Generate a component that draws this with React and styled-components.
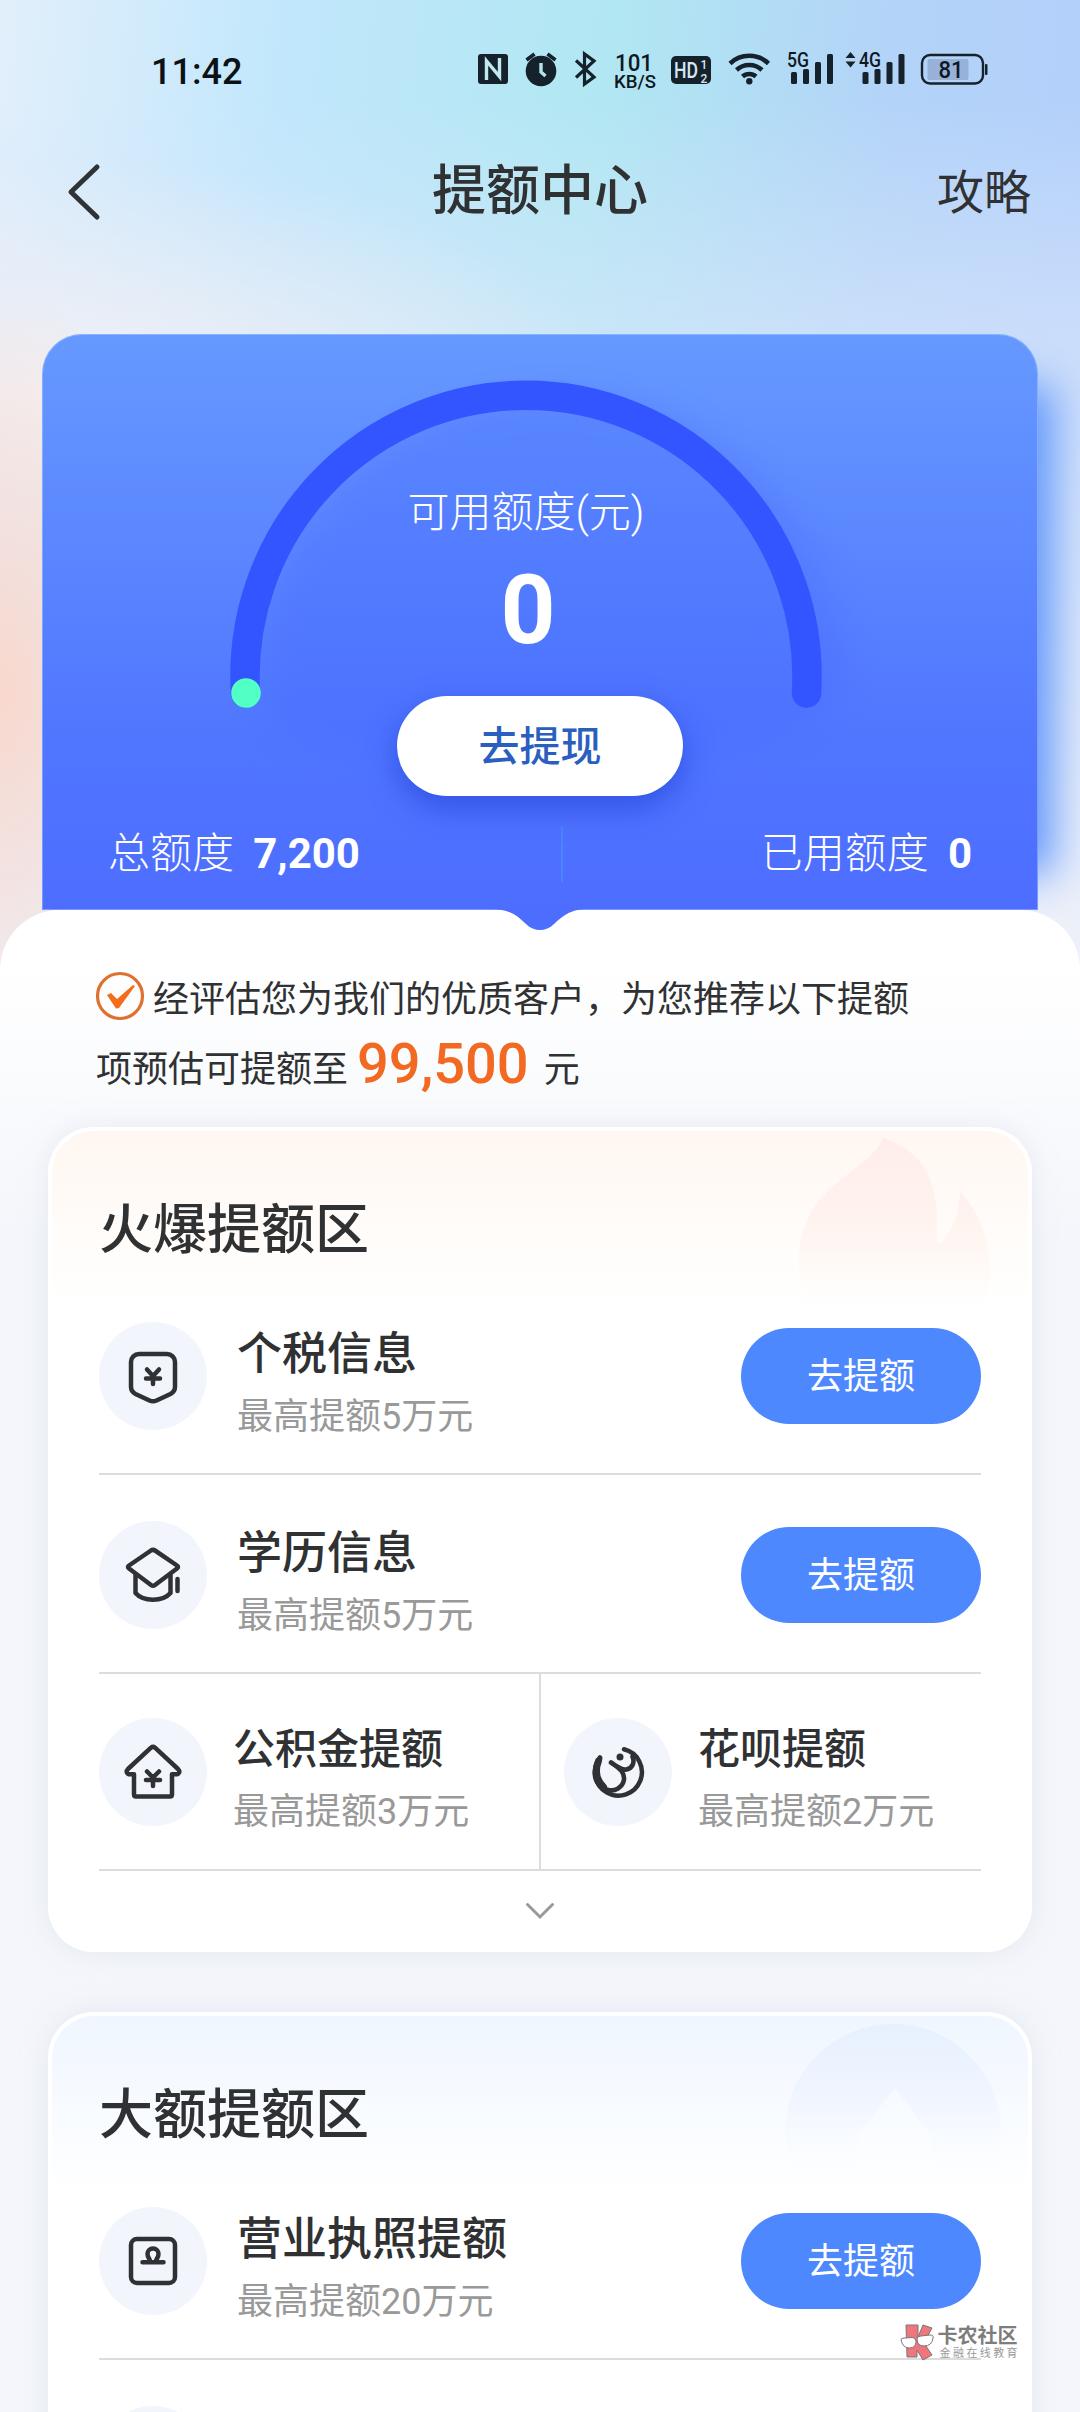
import styled, { createGlobalStyle } from 'styled-components';

const hotItems = [
  { icon: 'tax', title: '个税信息', limit: '最高提额5万元' },
  { icon: 'school', title: '学历信息', limit: '最高提额5万元' },
];

const hotHalfItems = [
  { icon: 'house', title: '公积金提额', limit: '最高提额3万元' },
  { icon: 'huabei', title: '花呗提额', limit: '最高提额2万元' },
];

const largeItems = [
  { icon: 'license', title: '营业执照提额', limit: '最高提额20万元' },
];

const icons = {
  tax: (
    <>
      <path d="M40 32h28a8 8 0 0 1 8 8v25c0 3-1.800 5.500-4.500 7l-14 6.500q-3.500 1.700-7 0l-14-6.500c-2.700-1.500-4.500-4-4.500-7V40a8 8 0 0 1 8-8z" />
      <path d="M48 47.500l6 6.500 6-6.500M47 56.500h14M54 54v8" />
    </>
  ),
  school: (
    <>
      <path d="M52 29.500q2-1.300 4 0l22 15q2 1.500 0 3L56 64q-2 1.500-4 0L30 47.500q-2-1.500 0-3z" />
      <path d="M36.500 54v18c8 9 27 9 35 0V54M78.500 58v12" />
    </>
  ),
  house: (
    <>
      <path d="M52 29.700q2-1.700 4 0l23 21.300c2.500 2.500 1 5.300-2 5.300h-4v20.200q0 2-2 2H37q-2 0-2-2V56.300h-4c-3 0-4.500-2.800-2-5.300z" />
      <path d="M48 53.500l6 6 6-6M47 62h14M54 60v8" />
    </>
  ),
  huabei: (
    <>
      <path d="M60 31.300A23.500 23.500 0 1 1 36 39.500" />
      <path
        d="M36 41C29 51 29 62 37 68c5 5 12 5.500 17 2.500 7-4.500 7.500-12 3.500-17.500-3-4-6-5.500-10.500-8.500 5 3.500 11 8 15.500 7 6-1.200 8.500-7 6-13"
        strokeWidth="4.600"
      />
      <path d="M34.500 43c-4 10-2 19 5 26" strokeWidth="7" />
      <circle cx="56" cy="39" r="3.500" fill="#2f3134" stroke="none" />
    </>
  ),
  license: (
    <>
      <rect x="32" y="32" width="44" height="44" rx="6" />
      <path d="M51 54c0-2-2.500-3.500-2.500-7a5.500 5.500 0 0 1 11 0c0 3.500-2.500 5-2.500 7M43.500 55.200h21" />
    </>
  ),
};

const StatusIcons = () => (
  <svg width="520" height="44" viewBox="474 48 520 44" fill="#16222b">
    {/* nfc */}
    <rect x="478" y="54" width="30" height="30" rx="3" />
    <path d="M486.500 80V61l13 15.500V58" fill="none" stroke="#bfe8f1" strokeWidth="3.400" />
    {/* alarm */}
    <circle cx="541" cy="71" r="15.300" />
    <path d="M526.500 60l8-6M555.500 60l-8-6" stroke="#16222b" strokeWidth="3.600" />
    <path d="M541 63v9l4.500 4" stroke="#b3e3ee" strokeWidth="3.400" fill="none" />
    {/* bluetooth */}
    <path
      d="M576 60.500l18 16.500-9.500 7V54l9.500 7-18 16.500"
      stroke="#16222b"
      strokeWidth="3.200"
      fill="none"
    />
    <StatusText x="634" y="70.500" $size={24.5} textLength="38" lengthAdjust="spacingAndGlyphs">
      101
    </StatusText>
    <StatusText x="635" y="88" $size={19} textLength="42" lengthAdjust="spacingAndGlyphs">
      KB/S
    </StatusText>
    {/* hd */}
    <rect x="671" y="56" width="40" height="28" rx="5" />
    <StatusText x="686" y="78" $size={22} $light textLength="24" lengthAdjust="spacingAndGlyphs">
      HD
    </StatusText>
    <StatusText x="704" y="68.500" $size={12} $light>1</StatusText>
    <StatusText x="704" y="83" $size={12} $light>2</StatusText>
    {/* wifi */}
    <g fill="none" stroke="#16222b" strokeWidth="4.500">
      <path d="M730 63.500a28 28 0 0 1 38.500 0" />
      <path d="M736.500 70a18.500 18.500 0 0 1 25.500 0" />
      <path d="M742.500 76.500a10 10 0 0 1 13.500 0" />
    </g>
    <circle cx="749.300" cy="81.300" r="3.200" />
    {/* sim 1 */}
    <StatusText x="798" y="66.500" $size={20} textLength="22" lengthAdjust="spacingAndGlyphs">
      5G
    </StatusText>
    <rect x="791" y="72" width="6" height="12" rx="1.500" />
    <rect x="803" y="69" width="6" height="15" rx="1.500" />
    <rect x="815" y="62" width="6" height="22" rx="1.500" />
    <rect x="827" y="54" width="6" height="30" rx="1.500" />
    {/* sim 2 */}
    <path d="M850.500 52l5 6h-10zM850.500 67.500l5-6h-10z" />
    <StatusText x="870" y="66.500" $size={20} textLength="22" lengthAdjust="spacingAndGlyphs">
      4G
    </StatusText>
    <rect x="862.500" y="72" width="6" height="12" rx="1.500" />
    <rect x="874.500" y="69" width="6" height="15" rx="1.500" />
    <rect x="886.500" y="62" width="6" height="22" rx="1.500" />
    <rect x="898.500" y="54" width="6" height="30" rx="1.500" />
    {/* battery */}
    <rect x="922" y="55" width="61" height="28.500" rx="8" fill="none" stroke="#16222b" strokeWidth="2.400" />
    <rect x="927.500" y="59" width="41" height="21" rx="2" fill="#97b1d9" />
    <rect x="985" y="64" width="2.500" height="11" rx="1" />
    <StatusText x="951" y="78" $size={23} textLength="25" lengthAdjust="spacingAndGlyphs">
      81
    </StatusText>
  </svg>
);

const Gauge = () => (
  <GaugeSvg width="640" height="360" viewBox="206 360 640 360">
    <defs>
      <filter id="gaugeBlur" x="-20%" y="-20%" width="150%" height="150%">
        <feGaussianBlur stdDeviation="16" />
      </filter>
    </defs>
    <path
      d="M262 690A285 285 0 0 1 846 680C840 720 760 760 541 760C330 760 262 740 262 690z"
      fill="#4568ff"
      opacity="0.3"
      filter="url(#gaugeBlur)"
    />
    <path d="M245.500 693A281 281 0 1 1 806.500 693" fill="none" stroke="#3355ff" strokeWidth="29.500" strokeLinecap="round" />
    <circle cx="246" cy="693" r="14.800" fill="#52ffc4" />
  </GaugeSvg>
);

const Flame = () => (
  <Decoration $right={36} width="200" height="180" viewBox="796 1127 200 180">
    <defs>
      <linearGradient id="flame" x1="0" y1="0" x2="0" y2="1">
        <stop offset="0" stopColor="#ffede8" />
        <stop offset="0.550" stopColor="#fff4f0" />
        <stop offset="1" stopColor="#fff8f6" stopOpacity="0" />
      </linearGradient>
    </defs>
    <path
      d="M883 1138C868 1175 800 1182 799 1262C799 1280 802 1295 806 1307H984C994 1285 994 1225 960 1192C959 1215 952 1230 942 1242C935 1247 937 1238 937 1225C938 1185 926 1152 883 1138z"
      fill="url(#flame)"
    />
  </Decoration>
);

const Arrow = () => (
  <Decoration $right={29} width="220" height="170" viewBox="783 2012 220 170">
    <defs>
      <linearGradient id="disc" x1="0" y1="0" x2="0" y2="1">
        <stop offset="0" stopColor="#e6f0fe" />
        <stop offset="0.550" stopColor="#f1f6ff" />
        <stop offset="1" stopColor="#fafcff" stopOpacity="0" />
      </linearGradient>
    </defs>
    <path
      d="M785 2132A108 108 0 1 1 1001 2132L998 2170H934L930 2134L895 2088L858 2134L854 2170H790z"
      fill="url(#disc)"
    />
  </Decoration>
);

const Item = ({ item, compact }) => (
  <>
    <IconCircle viewBox="0 0 108 108">{icons[item.icon]}</IconCircle>
    <ItemText $compact={compact}>
      <h3>{item.title}</h3>
      <span>{item.limit}</span>
    </ItemText>
  </>
);

const App = () => {
  return (
    <Page>
      <GlobalStyle />
      <StatusBar>
        <time>11:42</time>
        <StatusIcons />
      </StatusBar>

      <NavBar>
        <svg width="36" height="60" viewBox="0 0 36 60" fill="none" stroke="#2f3336" strokeWidth="5">
          <path d="M30 5L4 30l26 25" strokeLinecap="round" strokeLinejoin="round" />
        </svg>
        <h1>提额中心</h1>
        <span>攻略</span>
      </NavBar>

      <CreditCard>
        <Gauge />
        <Label>可用额度(元)</Label>
        <Available>0</Available>
        <WithdrawButton>去提现</WithdrawButton>
        <Totals>
          <Label>
            总额度 <b>7,200</b>
          </Label>
          <i />
          <Label>
            已用额度 <b>0</b>
          </Label>
        </Totals>
      </CreditCard>

      <Sheet>
        <Notch width="98" height="22" viewBox="0 0 98 22">
          <path d="M0 0C20 0 27 8 35 15C43 23 55 23 63 15C71 8 78 0 98 0z" fill="#4d6dff" />
        </Notch>
        <Notice>
          <p>
            <svg width="50" height="50" viewBox="0 0 50 50">
              <circle cx="25" cy="25" r="22.500" fill="none" stroke="#e0702f" strokeWidth="3.200" />
              <path d="M12 24l4-2 6 6 16-14 2 1-16 22-3 .5z" fill="#f46d1b" />
            </svg>
            经评估您为我们的优质客户，为您推荐以下提额
          </p>
          <p>
            项预估可提额至<strong>99,500</strong>元
          </p>
        </Notice>

        <Section $tint="#fff7f1">
          <Flame />
          <h2>火爆提额区</h2>
          {hotItems.map((item) => (
            <Row key={item.title}>
              <Item item={item} />
              <RaiseButton>去提额</RaiseButton>
            </Row>
          ))}
          <HalfRow>
            {hotHalfItems.map((item) => (
              <HalfCell key={item.title}>
                <Item item={item} compact />
              </HalfCell>
            ))}
          </HalfRow>
          <More>
            <svg width="30" height="18" viewBox="0 0 30 18" fill="none" stroke="#999" strokeWidth="3">
              <path d="M2.500 2.500L15 15 27.500 2.500" strokeLinecap="round" />
            </svg>
          </More>
        </Section>

        <Section $tint="#eff6ff">
          <Arrow />
          <h2>大额提额区</h2>
          {largeItems.map((item) => (
            <Row key={item.title}>
              <Item item={item} />
              <RaiseButton>去提额</RaiseButton>
            </Row>
          ))}
          <Row>
            <IconCircle viewBox="0 0 108 108" />
            <RaiseButton />
          </Row>
        </Section>
      </Sheet>

      <Watermark>
        <svg width="35" height="37" viewBox="0 0 35 37" stroke="#777" strokeWidth="1">
          <path d="M6 1h12v12l5-12 9 3-8 15 8 12-9 5-6-10v7H7z" fill="#f0767e" />
          <path d="M1 16q0-2 3-2l8-.5q4 0 4 4 0 6-6 6.500-7 .5-9-8z" fill="#fff" />
          <path d="M17 15q0-3 4-3l9-1q4 0 3 3-1 8-9 8-7 0-7-7z" fill="#fff" />
        </svg>
        <div>
          <b>卡农社区</b>
          <small>金融在线教育</small>
        </div>
      </Watermark>
    </Page>
  );
};

const GlobalStyle = createGlobalStyle`
  * {
    box-sizing: border-box;
    margin: 0;
    padding: 0;
  }

  body {
    background: #f4f6fb;
    color: #303133;
    font-family: Roboto, 'Noto Sans CJK SC', sans-serif;
  }

  svg {
    display: block;
    flex-shrink: 0;
  }
`;

const Page = styled.main`
  position: relative;
  width: 1080px;
  height: 2412px;
  overflow: hidden;
  background:
    radial-gradient(ellipse 200px 400px at 0 690px, #f9d8cd 0%, #f9d8cd00 100%),
    radial-gradient(ellipse 560px 240px at 60px 400px, #f3f1f4 0%, #f3f1f400 100%),
    linear-gradient(180deg, #d9eafb00 100px, #d9e6fb99 330px, #eef1f9 960px),
    linear-gradient(
      96deg,
      #e2effb 0,
      #c1e7fc 22%,
      #b1e7f2 46%,
      #b3d3f8 68%,
      #b3ccfd 100%
    );
`;

const StatusBar = styled.header`
  display: flex;
  align-items: center;
  justify-content: space-between;
  height: 140px;
  padding: 0 86px 0 151px;

  time {
    padding-top: 3px;
    font-size: 36px;
    font-weight: 500;
    color: #0b1116;
    line-height: 44px;
  }
`;

const StatusText = styled.text`
  font-family: Roboto, sans-serif;
  font-size: ${({ $size }) => $size}px;
  font-weight: 500;
  fill: ${({ $light }) => ($light ? '#d5e8f2' : '#10181f')};
  text-anchor: middle;
`;

const NavBar = styled.nav`
  display: grid;
  grid-template-columns: 1fr auto 1fr;
  align-items: center;
  height: 104px;
  padding: 0 49px;

  svg {
    margin-left: 18px;
  }

  h1 {
    font-size: 54px;
    font-weight: 500;
    line-height: 70px;
  }

  span {
    justify-self: end;
    padding-top: 2px;
    font-size: 47px;
    line-height: 70px;
  }
`;

const CreditCard = styled.section`
  position: relative;
  display: flex;
  flex-direction: column;
  align-items: center;
  width: 996px;
  height: 576px;
  margin: 90px 0 0 42px;
  padding-top: 151px;
  border-radius: 40px 40px 0 0;
  background: linear-gradient(180deg, #6699ff 0%, #5076ff 70%, #4d6dff 100%);
  color: #fff;
  box-shadow:
    inset 0 0 0 1px #b9d9ff66,
    58px 8px 40px -44px #5b93fa;
`;

const GaugeSvg = styled.svg`
  position: absolute;
  left: 164px;
  top: 26px;
  overflow: visible;
`;

const Label = styled.div`
  position: relative;
  left: -14px;
  font-size: 42px;
  font-weight: 300;
  line-height: 56px;
  white-space: pre;
`;

const Available = styled.div`
  position: relative;
  left: -12px;
  margin-top: 13px;
  font-size: 96px;
  font-weight: 700;
  line-height: 112px;
`;

const WithdrawButton = styled.button`
  position: relative;
  width: 286px;
  height: 100px;
  margin-top: 30px;
  padding-bottom: 6px;
  border: 0;
  border-radius: 50px;
  background: #fff;
  color: #2a5fc0;
  font: 500 41px/94px 'Noto Sans CJK SC', sans-serif;
  box-shadow: 0 12px 30px #2444d8aa;
`;

const Totals = styled.div`
  display: flex;
  align-items: center;
  justify-content: space-between;
  width: 100%;
  height: 56px;
  margin-top: 30px;
  padding: 0 66px;

  ${Label} {
    left: 0;
  }

  b {
    margin-left: 9px;
    font-weight: 700;
  }

  i {
    width: 2px;
    height: 56px;
    margin-left: 3px;
    background: #4a85fa;
  }
`;

const Sheet = styled.section`
  position: relative;
  padding: 52px 48px 0;
  border-radius: 60px 60px 0 0;
  background: linear-gradient(180deg, #fff 0, #fff 50px, #f4f6fb 330px);
`;

const Notch = styled.svg`
  position: absolute;
  left: 491px;
  top: -1px;
`;

const Notice = styled.div`
  height: 165px;
  padding-left: 48px;
  font-size: 36px;

  p {
    display: flex;
    align-items: center;
    height: 71px;
    white-space: nowrap;
  }

  p:first-child {
    height: 68px;
  }

  svg {
    margin: 0 8px 0 -1px;
  }

  strong {
    margin: 0 15px 4px 9px;
    color: #f26a21;
    font-size: 56px;
    font-weight: 500;
  }
`;

const Section = styled.section`
  position: relative;
  margin-bottom: 60px;
  padding: 0 51px;
  border-radius: 46px;
  background: linear-gradient(180deg, ${({ $tint }) => $tint} 0, #fff 180px);
  box-shadow:
    inset 0 0 0 4px #fff,
    0 0 24px #d5dbe880;

  h2 {
    position: relative;
    height: 149px;
    padding-top: 64px;
    font-size: 54px;
    font-weight: 500;
    line-height: 80px;
  }
`;

const Decoration = styled.svg`
  position: absolute;
  right: ${({ $right }) => $right}px;
  top: 0;
`;

const Row = styled.div`
  display: flex;
  align-items: center;
  height: 199px;
  padding-top: 2px;
  border-bottom: 2px solid #dcdcdc;
`;

const IconCircle = styled.svg`
  width: 108px;
  height: 108px;
  border-radius: 50%;
  background: #f2f5fc;
  fill: none;
  stroke: #2f3134;
  stroke-width: 4.5;
  stroke-linecap: round;
  stroke-linejoin: round;
`;

const ItemText = styled.div`
  margin-left: ${({ $compact }) => ($compact ? 26 : 30)}px;
  padding-top: ${({ $compact }) => ($compact ? 19 : 21)}px;

  h3 {
    font-size: ${({ $compact }) => ($compact ? 42 : 45)}px;
    font-weight: 500;
    line-height: 62px;
  }

  span {
    display: block;
    color: #999;
    font-size: 36px;
    line-height: 62px;
  }
`;

const RaiseButton = styled.button`
  width: 240px;
  height: 96px;
  margin-left: auto;
  padding-bottom: 5px;
  border: 0;
  border-radius: 48px;
  background: #4d88ff;
  color: #fff;
  font: 400 36px/91px 'Noto Sans CJK SC', sans-serif;
`;

const HalfRow = styled.div`
  display: grid;
  grid-template-columns: 440px 1fr;
  height: 197px;
  border-bottom: 2px solid #dcdcdc;
`;

const HalfCell = styled.div`
  display: flex;
  align-items: center;

  & + & {
    padding-left: 23px;
    border-left: 2px solid #dcdcdc;
  }
`;

const More = styled.div`
  display: flex;
  align-items: center;
  justify-content: center;
  height: 81px;
  padding-bottom: 2px;
`;

const Watermark = styled.aside`
  position: absolute;
  right: 60px;
  top: 2324px;
  display: flex;
  gap: 3px;
  color: #7d7d7d;

  b,
  small {
    display: block;
    white-space: nowrap;
  }

  b {
    font-size: 20px;
    line-height: 24px;
  }

  small {
    color: #999;
    font-size: 11px;
    line-height: 12px;
    letter-spacing: 2.4px;
    padding-left: 2px;
  }
`;

export default App;
